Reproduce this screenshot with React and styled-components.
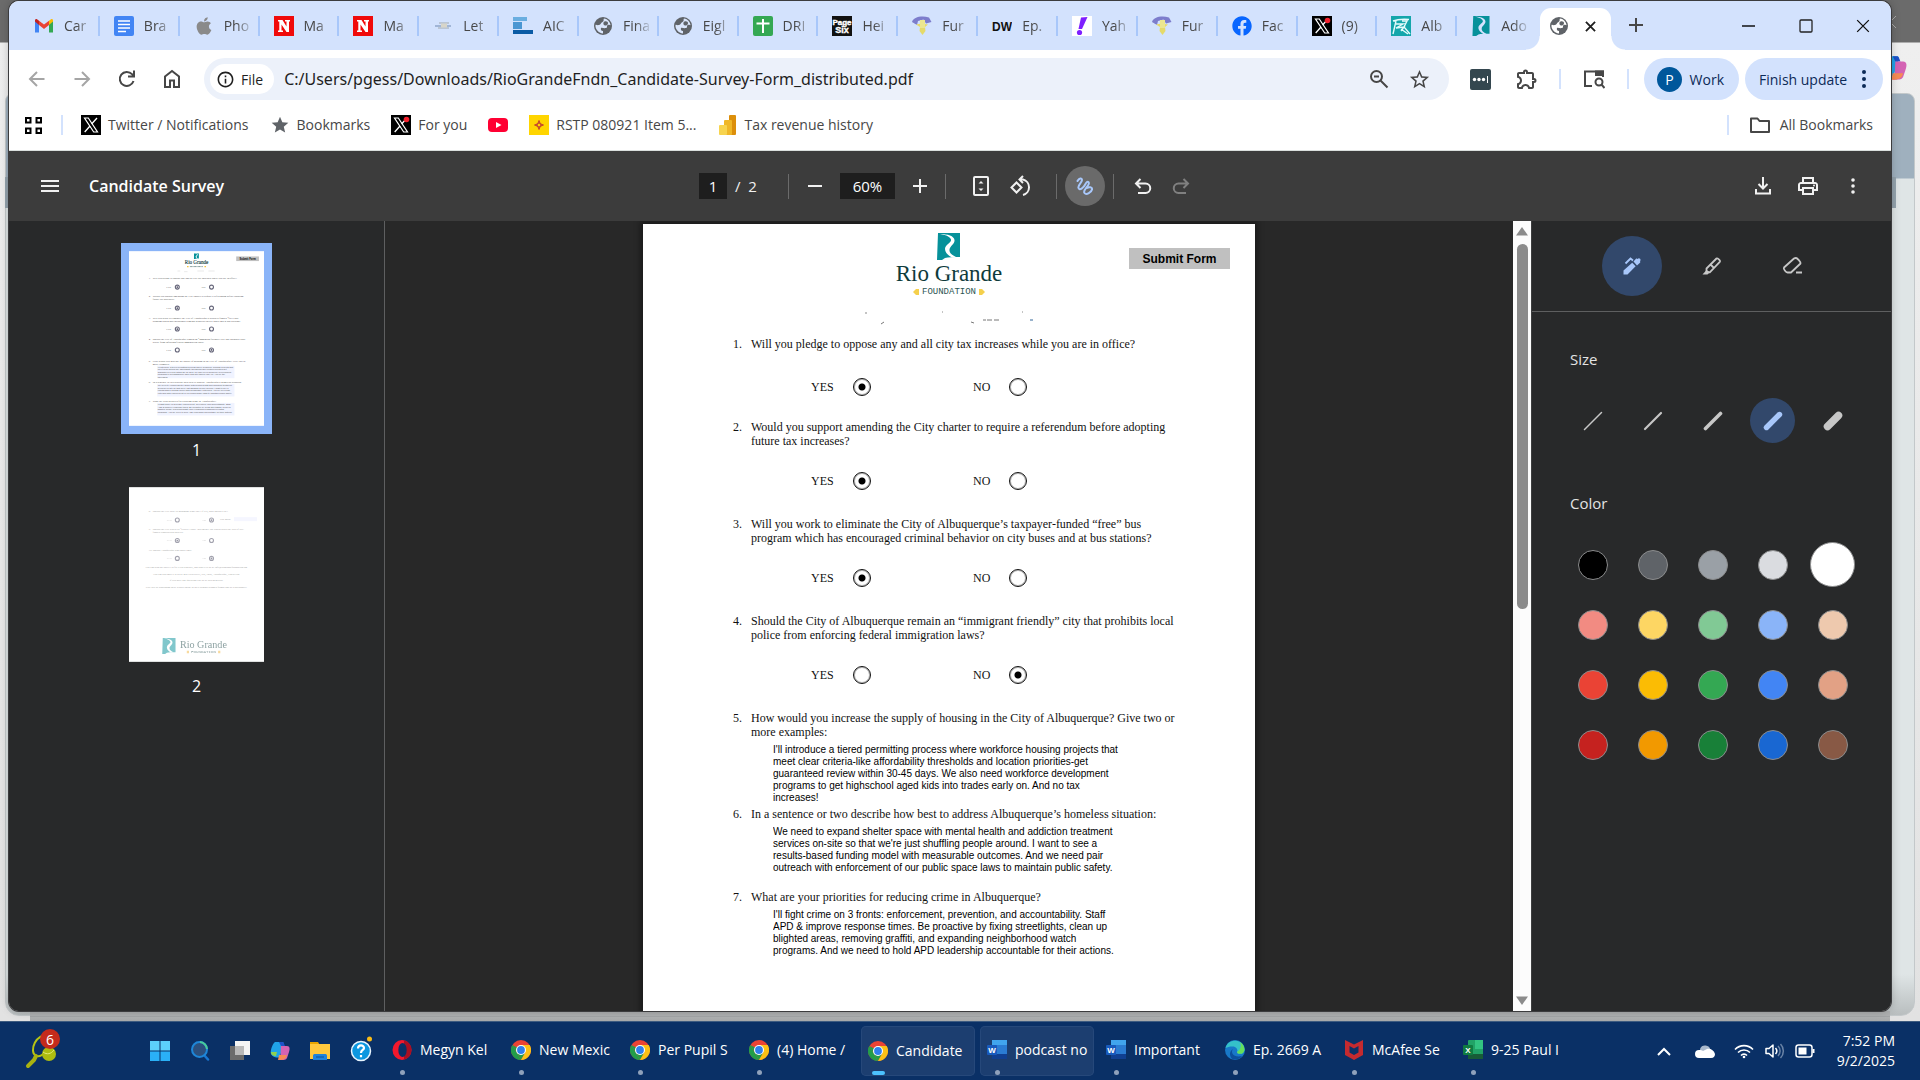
import React from "react";
import styled, { createGlobalStyle, css } from "styled-components";
import { MdStar, MdStarBorder, MdOutlineExtension, MdOutlinePrint, MdInfoOutline } from "react-icons/md";
import { FaApple, FaFacebook } from "react-icons/fa";

const ui = `"Open Sans", "Noto Sans", sans-serif`;
const serif = `"Liberation Serif", serif`;
const sans = `"Liberation Sans", sans-serif`;

const GlobalStyle = createGlobalStyle`
  * { box-sizing: border-box; }
  body { margin: 0; overflow: hidden; font-family: ${ui}; background: #e6e6e6; }
  button, input, textarea { font: inherit; color: inherit; }
  button { border: 0; padding: 0; background: none; }
  svg { display: block; flex: none; }
`;

/* ---------- shell ---------- */

const Screen = styled.div`
  height: 100vh;
  display: flex;
  flex-direction: column;
`;
const Desktop = styled.main`
  position: relative;
  flex: 1;
  min-height: 0;
  display: flex;
  padding: 1px 29px 10px 9px;
  background: linear-gradient(#6b6b6b 42px, #efefef 43px, #e2e2e2);
`;
const BackWindow = styled.div`
  position: absolute;
  left: 5px;
  right: 5px;
  top: 93px;
  bottom: 5px;
  border-radius: 8px 8px 14px 14px;
  border: 1px solid #c3c8ca;
  background: linear-gradient(#9fb0be 84px, #dfe5e6 85px, #dfe5e6 880px, #b9bebf);
`;
const BackStrip = styled.div`
  position: absolute;
  left: 5px;
  right: 24px;
  top: 177px;
  height: 31px;
  background: #94a3ad;
`;
const BottomEdge = styled.div`
  position: absolute;
  left: 30px;
  right: 30px;
  bottom: 0;
  height: 10px;
  background: linear-gradient(#aeb0b1 5px, #96999b 5px, #b0b2b3 6px, #a7a9aa);
`;
const BackClose = styled.div`
  position: absolute;
  right: 20px;
  top: 12px;
`;
const BackCopilot = styled.div`
  position: absolute;
  right: 13px;
  top: 55px;
`;
const Window = styled.section`
  position: relative;
  flex: 1;
  min-width: 0;
  display: flex;
  flex-direction: column;
  overflow: hidden;
  background: #fff;
  border-radius: 10px;
  box-shadow: 0 0 0 1px #3c3c3e, 0 0 10px rgba(0, 0, 0, 0.25);
`;

/* ---------- tab strip ---------- */

const TabStrip = styled.nav`
  height: 49px;
  display: flex;
  align-items: flex-end;
  background: #d3e2fd;
  padding-left: 11px;
`;
const Tabs = styled.div`
  flex: 1;
  min-width: 0;
  height: 49px;
  display: flex;
  align-items: center;
`;
const Tab = styled.button`
  flex: 1;
  min-width: 0;
  height: 20px;
  display: flex;
  align-items: center;
  gap: 10px;
  padding-left: 14px;
  border-right: 2px solid ${(p) => (p.$last ? "transparent" : "#a8c7fa")};
`;
const TabText = styled.span`
  max-width: 28px;
  white-space: nowrap;
  text-align: left;
  font-size: 14px;
  line-height: 20px;
  color: #474747;
  mask-image: linear-gradient(90deg, #000 12px, rgba(0, 0, 0, 0.2) 26px);
`;
const ActiveTab = styled.div`
  position: relative;
  width: 71px;
  height: 42px;
  margin-left: 3px;
  display: flex;
  align-items: center;
  justify-content: space-between;
  padding: 0 11px 6px 9px;
  border-radius: 11px 11px 0 0;
  background: #fff;
  &::before, &::after {
    content: "";
    position: absolute;
    bottom: 0;
    width: 14px;
    height: 14px;
  }
  &::before { left: -14px; background: radial-gradient(circle at 0 0, transparent 13px, #fff 14px); }
  &::after { right: -14px; background: radial-gradient(circle at 100% 0, transparent 13px, #fff 14px); }
`;
const IconButton = styled.button`
  width: ${(p) => p.$w || 45}px;
  height: ${(p) => p.$h || 40}px;
  flex: none;
  display: flex;
  align-items: center;
  justify-content: center;
  color: ${(p) => p.$color || "#474747"};
`;
const WindowButtons = styled.div`
  display: flex;
  height: 49px;
  align-items: center;
  margin-left: 59px;
`;

/* ---------- address bar ---------- */

const AddressRow = styled.div`
  height: 58px;
  display: flex;
  align-items: center;
  padding: 0 8px 0 5px;
  background: #fff;
`;
const Omnibox = styled.div`
  flex: 1;
  min-width: 0;
  height: 42px;
  margin-left: 10px;
  display: flex;
  align-items: center;
  padding: 0 10px 0 6px;
  border-radius: 21px;
  background: #ecf1fa;
`;
const FileChip = styled.button`
  height: 30px;
  display: flex;
  align-items: center;
  gap: 6px;
  padding: 0 11px 0 6px;
  border-radius: 15px;
  background: #fff;
  color: #1f1f1f;
  font-size: 14px;
  font-weight: 500;
`;
const UrlInput = styled.input`
  flex: 1;
  min-width: 0;
  margin-left: 10px;
  padding: 0;
  border: 0;
  outline: 0;
  background: none;
  color: #1f1f1f;
  font-family: "Noto Sans", sans-serif;
  font-size: 16px;
  line-height: 24px;
`;
const Divider = styled.span`
  width: 2px;
  height: 20px;
  flex: none;
  background: #d3e2fd;
`;
const Extensions = styled.div`
  display: flex;
  align-items: center;
  padding: 0 15px 0 9px;
`;
const ExtensionPair = styled.div`
  display: flex;
  padding-right: 8px;
`;
const Pill = styled.button`
  height: 42px;
  flex: none;
  display: flex;
  align-items: center;
  justify-content: space-between;
  width: ${(p) => p.$w}px;
  margin-left: ${(p) => p.$ml || 0}px;
  padding: ${(p) => p.$pad};
  border-radius: 21px;
  background: #d3e2fd;
  color: #0c2a57;
  font-size: 14px;
`;
const Avatar = styled.span`
  width: 25px;
  height: 25px;
  display: grid;
  place-items: center;
  border-radius: 50%;
  background: #00579b;
  color: #fff;
  font-size: 14px;
`;

/* ---------- bookmarks ---------- */

const BookmarkRow = styled.div`
  height: 43px;
  display: flex;
  align-items: center;
  gap: 18px;
  padding: 0 18px 8px 15px;
  border-bottom: 1px solid #dadfdd;
`;
const BookmarkList = styled.div`
  flex: 1;
  display: flex;
  gap: 21px;
`;
const Bookmark = styled.a`
  display: flex;
  align-items: center;
  gap: 7px;
  color: #474747;
  font-size: 14px;
  line-height: 20px;
  white-space: nowrap;
  text-decoration: none;
`;
const AllBookmarks = styled(Bookmark)`
  gap: 10px;
  padding-left: 3px;
`;
const Fill = styled.span`
  flex: 1;
`;

/* ---------- PDF toolbar ---------- */

const PdfBar = styled.header`
  height: 70px;
  display: grid;
  grid-template-columns: 1fr auto 1fr;
  align-items: center;
  padding: 0 16px 0 18px;
  background: #3c3c3c;
  color: #f1f1f1;
`;
const PdfTitle = styled.div`
  display: flex;
  align-items: center;
  gap: 17px;
`;
const TitleText = styled.h1`
  margin: 0;
  font-size: 16px;
  font-weight: 600;
  line-height: 24px;
  color: #fff;
`;
const PdfControls = styled.div`
  display: flex;
  align-items: center;
  margin-right: 12px;
`;
const NumberBox = styled.input`
  width: ${(p) => p.$w}px;
  height: 26px;
  padding: 0;
  border: 0;
  background: #1e1e1e;
  color: #fff;
  text-align: center;
  font-size: 15px;
`;
const PageTotal = styled.span`
  width: 61px;
  padding-left: 8px;
  font-size: 15px;
  white-space: pre;
`;
const BarLine = styled.span`
  width: 1px;
  height: 25px;
  background: #6b6b6b;
`;
const FitGroup = styled.div`
  display: flex;
  padding: 0 15px;
`;
const AnnotateButton = styled(IconButton)`
  margin: 0 8px;
  border-radius: 50%;
  background: #6a6a6a;
`;
const PdfActions = styled.div`
  display: flex;
  justify-content: flex-end;
`;

/* ---------- PDF body ---------- */

const Viewer = styled.div`
  flex: 1;
  min-height: 0;
  display: flex;
  background: #282828;
`;
const ThumbPanel = styled.aside`
  width: 376px;
  flex: none;
  display: flex;
  flex-direction: column;
  align-items: center;
  padding-top: 22px;
  border-right: 1px solid #5e5f60;
  background: #28292a;
  color: #fff;
`;
const Thumb = styled.button`
  padding: 8px;
  background: ${(p) => (p.$active ? "#8ab4f8" : "transparent")};
`;
const ThumbNumber = styled.span`
  height: 45px;
  padding-top: 4px;
  font-size: 16px;
  line-height: 24px;
`;
const Canvas = styled.div`
  flex: 1;
  min-width: 0;
  display: flex;
  justify-content: center;
  overflow: hidden;
  padding-top: 3px;
`;
const Page = styled.form`
  width: 612px;
  height: 792px;
  flex: none;
  background: #fff;
  color: #111;
  box-shadow: 0 0 6px 3px rgba(0, 0, 0, 0.35);
`;
const PageHead = styled.div`
  display: grid;
  grid-template-columns: 1fr auto 1fr;
  align-items: start;
  padding: 9px 25px 0;
`;
const Logo = styled.div`
  grid-column: 2;
  display: flex;
  flex-direction: column;
  align-items: center;
`;
const LogoName = styled.span`
  font-family: ${serif};
  font-size: 23px;
  line-height: 28px;
  color: #0f3b3c;
`;
const LogoSub = styled.span`
  display: flex;
  align-items: center;
  gap: 3px;
  font-family: "Liberation Mono", monospace;
  font-size: 9px;
  line-height: 8px;
  color: #2c5554;
`;
const SubmitButton = styled.button`
  justify-self: end;
  width: 101px;
  height: 21px;
  margin-top: 15px;
  background: #c0c0c0;
  font-family: ${sans};
  font-size: 12px;
  font-weight: 700;
  line-height: 20px;
  color: #000;
`;
const Residue = styled.div`
  height: 41px;
  padding: 15px 0 0 221px;
`;
const Question = styled.section`
  padding-left: 90px;
  font-family: ${serif};
  font-size: 12px;
  line-height: 14px;
`;
const Prompt = styled.div`
  display: grid;
  grid-template-columns: 18px 1fr;
  white-space: pre-line;
`;
const Choices = styled.div`
  display: flex;
  height: 18px;
  margin: ${(p) => (p.$single ? "27px 0 24px" : "24px 0 27px")};
  padding-left: 78px;
`;
const Choice = styled.label`
  width: ${(p) => (p.$wide ? 162 : 80)}px;
  display: flex;
  align-items: center;
  gap: 19px;
`;
const Radio = styled.input`
  appearance: none;
  width: 18px;
  height: 18px;
  margin: 0;
  border: 1px solid #111;
  border-radius: 50%;
  box-shadow: inset 0 0 0 1px #b5b5b5;
  &:checked { background: radial-gradient(circle, #000 3px, transparent 4px); }
`;
const Answer = styled.textarea`
  display: block;
  width: 400px;
  height: ${(p) => p.$lines * 12}px;
  margin: 5px 0 ${(p) => (p.$lines === 5 ? 3 : 16)}px 40px;
  padding: 0;
  border: 0;
  outline: 0;
  resize: none;
  overflow: hidden;
  background: none;
  white-space: pre;
  font-family: ${sans};
  font-size: 10px;
  line-height: 12px;
  color: #000;
`;

/* ---------- scrollbar ---------- */

const Scrollbar = styled.div`
  width: 18px;
  flex: none;
  display: flex;
  flex-direction: column;
  align-items: center;
  padding: 6px 0;
  background: #fcfcfc;
`;
const ScrollTrack = styled.div`
  flex: 1;
  width: 11px;
  margin: 8px 0;
`;
const ScrollThumb = styled.div`
  height: 49%;
  border-radius: 6px;
  background: #8b8b8b;
`;

/* ---------- ink panel ---------- */

const InkPanel = styled.aside`
  width: 360px;
  flex: none;
  border-left: 1px solid #3d3e3f;
  background: #28292a;
  color: #e3e3e3;
`;
const ToolRow = styled.div`
  display: flex;
  justify-content: center;
  gap: 20px;
  padding: 15px 0;
  border-bottom: 1px solid #5e5f60;
`;
const ToolButton = styled.button`
  width: 60px;
  height: 60px;
  display: grid;
  place-items: center;
  border-radius: 50%;
  background: ${(p) => (p.$active ? "#32486b" : "transparent")};
  color: ${(p) => (p.$active ? "#a8c7fa" : "#c7c7c7")};
`;
const InkGroup = styled.fieldset`
  margin: 0;
  padding: 35px 36px 13px 38px;
  border: 0;
`;
const InkLabel = styled.div`
  margin-bottom: 27px;
  font-size: 15px;
  line-height: 24px;
`;
const InkGrid = styled.div`
  display: grid;
  grid-template-columns: repeat(5, 45px);
  grid-auto-rows: 45px;
  place-items: center;
  gap: 15px;
`;
const SizeOption = styled.label`
  display: grid;
  place-items: center;
  color: #c7c7c7;
  & > * { grid-area: 1 / 1; }
  &:has(input:checked) { color: #a8c7fa; }
`;
const SizeRadio = styled.input`
  appearance: none;
  width: 45px;
  height: 45px;
  margin: 0;
  border-radius: 50%;
  &:checked { background: #32486b; }
`;
const Swatch = styled.input`
  appearance: none;
  width: 30px;
  height: 30px;
  margin: 0;
  border: 1px solid #8b8c8d;
  border-radius: 50%;
  background: ${(p) => p.$color};
  &:checked { width: 45px; height: 45px; }
`;

/* ---------- taskbar ---------- */

const Taskbar = styled.footer`
  height: 59px;
  flex: none;
  display: flex;
  align-items: center;
  padding: 0 25px 0 24px;
  border-top: 1px solid #3d5b80;
  background: #0a3066;
  color: #fff;
`;
const Widget = styled.button`
  position: relative;
  width: 116px;
  height: 50px;
  display: flex;
  align-items: center;
`;
const Badge = styled.span`
  position: absolute;
  left: 16px;
  top: 3px;
  width: 20px;
  height: 20px;
  display: grid;
  place-items: center;
  border-radius: 50%;
  background: #c42b1c;
  font-size: 14px;
`;
const Apps = styled.div`
  display: flex;
  gap: 5px;
  margin-left: 5px;
`;
const TaskButton = styled.button`
  width: 114px;
  height: 50px;
  display: flex;
  flex-direction: column;
  justify-content: flex-end;
  padding: 0 7px 1px;
  border-radius: 5px;
  ${(p) => p.$lit && css`background: #1c3e70; box-shadow: inset 0 0 0 1px #26487a;`}
`;
const AppMain = styled.span`
  height: 30px;
  display: flex;
  align-items: center;
  gap: 8px;
`;
const AppText = styled.span`
  white-space: nowrap;
  text-align: left;
  font-size: 14px;
  line-height: 20px;
`;
const AppMark = styled.span`
  width: ${(p) => (p.$on ? 13 : 5)}px;
  height: ${(p) => (p.$on ? 4 : 5)}px;
  margin: 5px 0 0 ${(p) => (p.$on ? 4 : 8)}px;
  border-radius: 3px;
  background: ${(p) => (p.$on ? "#4cc2ff" : "#8fa1bb")};
`;
const Tray = styled.div`
  display: flex;
  align-items: center;
`;
const Clock = styled.time`
  width: 72px;
  text-align: right;
  font-size: 14px;
  line-height: 20px;
  white-space: nowrap;
`;

/* ---------- icons ---------- */

const Svg = ({ s = 20, w, h, box = "0 0 20 20", children, ...r }) => (
  <svg width={w || s} height={h || s} viewBox={box} fill="none" aria-hidden="true" {...r}>{children}</svg>
);
const Line = (p) => <Svg stroke="currentColor" strokeWidth="2" {...p} />;

const Gmail = () => (
  <Svg><path d="M1 4v12.500h4V8z" fill="#4285f4" /><path d="M15 8v8.500h4V4z" fill="#34a853" /><path d="M1 5.500 5 9V4.800L3 3.300C2 2.700 1 3.500 1 4.500z" fill="#c5221f" /><path d="M19 5.500 15 9V4.800l2-1.500c1-.6 2 .2 2 1.200z" fill="#fbbc04" /><path d="M5 4.800 10 8.600l5-3.800V9l-5 3.900L5 9z" fill="#ea4335" /></Svg>
);
const Docs = () => (
  <Svg><rect width="20" height="20" rx="2" fill="#4285f4" /><path d="M4 5h12M4 8.500h12M4 12h12M4 15.500h8" stroke="#fff" strokeWidth="1.600" /></Svg>
);
const Apple = () => <FaApple size={20} color="#8a8a8a" />;
const Newsweek = () => (
  <Svg><rect width="20" height="20" fill="#f00a0a" /><path d="M4 4h4.500l4 6.500V5.500H11V4h5v1.500h-1V16h-2.500L7.500 8.500v6H9V16H4v-1.500h1.300v-9H4z" fill="#fff" /></Svg>
);
const Plane = () => (
  <Svg><path d="M2 10h16" stroke="#8fa6c8" strokeWidth="1.500" /><path d="M6 7h10M5 12h11" stroke="#b3bcc6" strokeWidth="1.500" /><path d="M8 7.500h6v4H8z" fill="#d7d5c9" /></Svg>
);
const Steps = () => (
  <Svg><path d="M0 1h14v4H0z" fill="#6aaee0" /><path d="M0 6h9v7H0z" fill="#4a96d2" /><path d="M0 14h20v4H0z" fill="#0a5ba5" /></Svg>
);
const Globe = ({ land = "#d9e5fb" }) => (
  <Svg><circle cx="10" cy="10" r="9" fill="#5f6368" /><path d="M11 2.500c-1 1.500.5 2.500-1.500 3.500S8 8.500 6 9s-2.500-.5-3.500 0c-.5 4 3 8 7.500 8.500v-2.500c-2 0-2.500-1.500-2-3 1-.5 3 .5 5 0s0-2.500 2-3 2 .5 2.500 0C17 5.500 14 2.700 11 2.500z" fill={land} /><path d="M11.500 5.500c2-.5 3.500.3 3.500 1.700s-1.500 2.300-3 2.300-2.500-3-.5-4z" fill="#5f6368" /></Svg>
);
const Sheets = () => (
  <Svg><rect width="20" height="20" rx="2" fill="#34a853" /><path d="M10 3v14M3.500 7.500h13" stroke="#fff" strokeWidth="2" /></Svg>
);
const PageSix = () => (
  <Svg><rect width="20" height="20" fill="#111" /><text x="10" y="8.500" textAnchor="middle" fontFamily="Liberation Sans" fontWeight="700" fontSize="8" fill="#fff" stroke="#fff" strokeWidth=".4">Page</text><text x="10" y="17" textAnchor="middle" fontFamily="Liberation Sans" fontWeight="700" fontSize="9" fill="#fff" stroke="#fff" strokeWidth=".4">Six</text></Svg>
);
const Fund = () => (
  <Svg><path d="M0 6C1 1 10-1 17 1.500l2.500 4.500-5.500 1.500-2.500-4L6 5l-1 4z" fill="#7d7dcc" /><path d="M4 8.500c3-1 8-1 12 0l-3 2.500.5 4-3 4-3-4 .5-4z" fill="#e5da6a" /><path d="M8 4h5v8H8z" fill="#ece78f" /></Svg>
);
const DailyWire = () => (
  <Svg><text x="10" y="14.500" textAnchor="middle" fontFamily="Liberation Sans" fontWeight="700" fontSize="12" fill="#111">DW</text></Svg>
);
const Yahoo = () => (
  <Svg><rect width="20" height="20" fill="#fff" /><path d="m9 1.500 6.500-.5L10 13H6.500z" fill="#7e1fff" /><circle cx="7.500" cy="16.500" r="2.600" fill="#7e1fff" /></Svg>
);
const Facebook = () => <FaFacebook size={20} color="#0866ff" />;
const XLogo = ({ dot }) => (
  <Svg><rect width="20" height="20" fill="#000" /><path d="M3.500 3h3.800l9.200 14h-3.800z" stroke="#fff" strokeWidth="1.200" /><path d="m16 3-5.400 6M9 11l-5.300 6" stroke="#fff" strokeWidth="1.300" />{dot && <circle cx="15.500" cy="4.500" r="2.800" fill="#f4212e" />}</Svg>
);
const Albq = () => (
  <Svg><rect width="20" height="20" fill="#14a6ab" /><path d="M2 5c4-1.500 9-2 16-1.500M2 18 5 5M5 8h7l-7 4 8-1-3 4M11 5h5l-3 6 6 7M10 13l7 5" stroke="#e4fbfb" strokeWidth="1.400" /></Svg>
);
const RiverMark = ({ color = "#06919a", water = "#fff" }) => (
  <g><path d="M1 0h22v24c-7 0-12 0-15 1L5 27H0z" fill={color} /><path d="M3 1C10 2 13 4 14 6.500c1 3-6 5-6 9.500 0 4 4 7 7 8.500l4-.500c-4-2-7-4-6.500-7.500C13 13 18 11 17.500 7 17 3 11 1 3 1z" fill={water} /></g>
);
const River = ({ w = 20, h = 20, water }) => <Svg w={w} h={h} box="0 0 23 27"><RiverMark water={water} /></Svg>;
const Close = ({ s = 12, sw = 2 }) => <Line s={s} box="0 0 12 12" strokeWidth={sw}><path d="m1 1 10 10M11 1 1 11" /></Line>;
const Plus = ({ s = 14 }) => <Line s={s} box="0 0 14 14"><path d="M7 0v14M0 7h14" /></Line>;
const Dots = () => <Svg w={20} h={20} fill="currentColor"><circle cx="10" cy="3" r="2" /><circle cx="10" cy="10" r="2" /><circle cx="10" cy="17" r="2" /></Svg>;
const BackIcon = () => <Line s={20}><path d="M17.500 10H3.500M10 3l-7 7 7 7" /></Line>;
const ForwardIcon = () => <Line s={20}><path d="M2.500 10h14M10 3l7 7-7 7" /></Line>;
const ReloadIcon = () => <Line s={20}><path d="M16.500 12A7 7 0 1 1 15 5.200l1.500 1.600M17 1.500v6h-6" /></Line>;
const HomeIcon = () => <Line s={20}><path d="M3 7.500 10 2l7 5.500V18h-5v-6.500H8V18H3z" /></Line>;
const ZoomOut = () => <Line s={20}><circle cx="7.500" cy="7.500" r="5.500" /><path d="m11.500 11.500 7 7M5 7.500h5" /></Line>;
const KeyExt = () => <Svg w={21} h={21} box="0 0 21 21"><rect width="21" height="21" rx="2" fill="#34474f" /><circle cx="4.500" cy="10.500" r="1.700" fill="#fff" /><circle cx="9" cy="10.500" r="1.700" fill="#fff" /><circle cx="13.500" cy="10.500" r="1.700" fill="#fff" /><path d="M17.500 7v7" stroke="#fff" /></Svg>;
const TabSearch = () => <Line w={22} h={20} box="0 0 22 20"><path d="M9 17H2V2.500h18V8" /><path d="M13 2.500h7V6h-7z" fill="currentColor" /><circle cx="16" cy="13" r="3.500" /><path d="m18.500 15.500 3 3.500" /></Line>;
const AppsGrid = () => <Line w={19} h={19} box="0 0 19 19"><path d="M2 2h4.500v4.500H2zM12.500 2H17v4.500h-4.500zM2 12.500h4.500V17H2zM12.500 12.500H17V17h-4.500z" /></Line>;
const Youtube = () => <Svg><rect y="3" width="20" height="14" rx="4" fill="#ff0033" /><path d="m8 7 5.500 3L8 13z" fill="#fff" /></Svg>;
const Zia = () => <Svg><rect width="20" height="20" fill="#ffd500" /><circle cx="10" cy="10" r="2" stroke="#c8502a" strokeWidth="1.500" /><path d="M10 5.500V8M10 12v2.500M5.500 10H8M12 10h2.500" stroke="#c8502a" strokeWidth="2" /></Svg>;
const PowerBi = () => <Svg><rect x="12" y="0" width="7" height="20" rx="1" fill="#dc8f0b" /><rect x="7" y="5" width="8" height="15" rx="1" fill="#efb728" /><rect x="2" y="10" width="8" height="10" rx="1" fill="#f7d44f" /></Svg>;
const Folder = () => <Line><path d="M1 3.500h6.500L9.500 6H19v11H1z" strokeLinejoin="round" /></Line>;
const Menu = () => <Line w={18} h={14} box="0 0 18 14"><path d="M0 2h18M0 7h18M0 12h18" /></Line>;
const FitPage = () => <Line w={16} h={20} box="0 0 16 20"><rect x="1" y="1" width="14" height="18" rx="1" /><path d="M5.500 7.500h5L8 5zM5.500 12.500h5L8 15z" fill="currentColor" stroke="none" /></Line>;
const Rotate = () => <Line w={22} h={22} box="0 0 22 22"><path d="m1.500 12.500 5-5 5 5-5 5z" /><path d="M13 20a8 8 0 0 0 0-15.500h-3M13 1 9.500 4.500 13 8" /></Line>;
const Squiggle = () => <Line s={20} stroke="#a8c7fa"><path d="M2.500 5C4 2 7 1.500 7 4S2.500 9 3.500 12s5 0 7-4 4-2 3 .5-6 6-4 8.500 7-1 7.500-3.500-3-3-5-1.500" strokeLinecap="round" /></Line>;
const Undo = ({ flip }) => <Line w={18} h={18} box="0 0 18 18" transform={flip ? "scale(-1 1)" : undefined}><path d="M6.500 2 2 6.500 6.500 11M2 6.500h9.500a4.500 4.500 0 0 1 0 9.500H4" /></Line>;
const Download = () => <Line w={16} h={18} box="0 0 16 18"><path d="M8 0v11M3.500 7 8 11.500 12.500 7M1 12v4.500h14V12" /></Line>;
const PenIcon = () => <Svg s={20}><path d="m11.500 5.500 2.500-2.700c.6-.6 1.200-.3 1.600.2.700-1 1.800-1 2.500-.2s.6 1.800-.2 2.500c.5.400.6 1 .1 1.500L15 9.500z" fill="currentColor" /><path d="m10.200 6.800 3.400 3.500L5.500 18.500H1.500v-4z" fill="currentColor" /><path d="m3.500 7.500 5-5L11 4.500" stroke="currentColor" strokeWidth="1.800" /></Svg>;
const MarkerIcon = () => <Line s={20} strokeWidth="1.800"><path d="m4.500 12.500 10-10c.8-.8 4.300 2.200 3.300 3.300l-10 10.500H4.500zM8.500 8.500l3.500 3.500" /><path d="M4.500 14 .5 18.500h5L8 16z" fill="currentColor" stroke="none" /></Line>;
const EraserIcon = () => <Line s={20} strokeWidth="1.800"><path d="M12 2.500 2 11.500c-1 1.500 2 5 3.500 5H9l9.500-9C19 6 15 2 14 2s-1.300 0-2 .5zM14 16.500h6" strokeLinejoin="round" /></Line>;

const Chrome = () => (
  <Svg><circle cx="10" cy="10" r="10" fill="#ea4335" /><path d="M1.300 5 10 20A10 10 0 0 1 1.300 5z" fill="#229e4a" /><path d="M1.300 5 6 13l4 7 4.500-8z" fill="#229e4a" /><path d="M18.700 5A10 10 0 0 1 10 20l4.300-7.500L10 5z" fill="#fbc116" /><circle cx="10" cy="10" r="5" fill="#fff" /><circle cx="10" cy="10" r="3.900" fill="#2f80ed" /></Svg>
);
const Opera = () => <Svg><ellipse cx="10" cy="10" rx="9.500" ry="10" fill="#f3182d" /><path d="M12 .3a10 10 0 0 1 0 19.400z" fill="#a90f22" /><ellipse cx="10.500" cy="10" rx="4.200" ry="7" fill="#0a3066" /></Svg>;
const Word = () => <Svg><rect x="5" width="15" height="19" rx="1" fill="#2b7cd3" /><rect x="5" width="15" height="5" fill="#41a5ee" /><rect x="5" y="14" width="15" height="5" fill="#103f91" /><rect y="5" width="10" height="10" rx="1" fill="#185abd" /><text x="5" y="13" textAnchor="middle" fontFamily="Liberation Sans" fontWeight="700" fontSize="8" fill="#fff">W</text></Svg>;
const Excel = () => <Svg><rect x="5" width="15" height="19" rx="1" fill="#21a366" /><rect x="12" width="8" height="9" fill="#33c481" /><rect x="5" y="14" width="15" height="5" fill="#185c37" /><rect y="5" width="10" height="10" rx="1" fill="#107c41" /><text x="5" y="13" textAnchor="middle" fontFamily="Liberation Sans" fontWeight="700" fontSize="8" fill="#fff">X</text></Svg>;
const Edge = () => <Svg><circle cx="10" cy="10" r="10" fill="#1878c8" /><path d="M.5 8C2 1 10-1 15 2c4 2.500 6 8 3 11-2 1.500-6 1-6-1 1-2 0-4-2-5-3-1-7 0-9.500 1z" fill="#35c1c9" /><path d="M15 2c4 2.500 6 8 3 11-2 1.500-6 1-6-1 3-2 5-5 3-10z" fill="#66e05a" /><path d="M8 9c-3 4 1 9 9 7-2 3-6 4-9 3.500C4 17 4 11 8 9z" fill="#0c4f9c" /></Svg>;
const McAfee = () => <Svg><path d="M1 0 10 4.500 19 0v15l-9 5-9-5zm4.500 6v6.500L10 15l4.500-2.500V6L10 8.500z" fill="#c52a2f" fillRule="evenodd" /></Svg>;
const Start = () => <Svg><path d="M0 0h9.500v9.500H0zM10.500 0H20v9.500h-9.500z" fill="#5cd0fb" /><path d="M0 10.500h9.500V20H0zM10.500 10.500H20V20h-9.500z" fill="#2ab0f6" /></Svg>;
const SearchIcon = () => <Svg><path d="m14 14 4 4.500" stroke="#1877d2" strokeWidth="2.500" strokeLinecap="round" /><circle cx="9.500" cy="8.500" r="7.500" fill="#2c4f7d" stroke="#1e86d8" strokeWidth="2" /><path d="M10 1a7.500 7.500 0 0 1 7 7" stroke="#49cc9a" strokeWidth="2" /></Svg>;
const TaskView = () => <Svg><rect y="5" width="14" height="14" fill="#6b6b6b" /><rect x="5" width="15" height="14" fill="#f4f4f4" /><rect x="5" y="5" width="9" height="9" fill="#b9b9b9" /></Svg>;
const Copilot = ({ s = 20 }) => <Svg s={s}><path d="M5 1h7c2 0 2 1.500 1.500 3L10 15c-1 3-8 1-9-2-1-2 1-10 4-12z" fill="#20a3e8" /><path d="M9 1h3c2 0 2 2 3 4h-4z" fill="#1f50c8" /><path d="M1 11h6l-1 4c-3 0-5-1-5-4z" fill="#8fd14f" /><path d="M11 5h6c3 0 3 3 2 6l-2 6c-1 2-3 2-5 2H8c2 0 2-2 2.500-3z" fill="#d463b4" /><path d="M9 14h8c-1 4-3 5-9 5z" fill="#f78b54" /></Svg>;
const Explorer = () => <Svg><path d="M0 1h8l1.500 2.500H0z" fill="#e8a500" /><rect y="3" width="20" height="15" fill="#ffc83d" /><path d="M3 19v-4.500c0-1 1-1.500 2-1.500h10c1 0 2 .5 2 1.500V19z" fill="#1f83dc" /><path d="M6 16h8" stroke="#0b529c" /></Svg>;
const Help = () => <Svg w={24} h={30} box="0 0 24 30"><circle cx="13" cy="15" r="9.500" fill="#0c97e0" stroke="#e9f6ff" strokeWidth="1.500" /><path d="M10 12.500c0-4 6-4 6-.5 0 2-3 2-3 5M13 19v2.200" stroke="#fff" strokeWidth="2.200" /><circle cx="21.500" cy="3" r="2.500" fill="#fbbc16" /></Svg>;
const Tennis = () => <Svg w={32} h={36} box="0 0 32 36"><ellipse cx="17" cy="13" rx="7" ry="11" transform="rotate(28 17 13)" stroke="#b6c414" strokeWidth="2" /><path d="m12 23-2 4-6 6" stroke="#a9b210" strokeWidth="4" strokeLinecap="round" /><circle cx="25" cy="21" r="7" fill="#aebd10" /><path d="M19 19c4 3 8 2 11-2" stroke="#e3ec7a" /></Svg>;
const Chevron = () => <Line w={14} h={9} box="0 0 14 9" stroke="#fff"><path d="m1 8 6-6 6 6" /></Line>;
const Cloud = () => <Svg w={20} h={14} box="0 0 20 14"><path d="M5 5a5.500 5.500 0 0 1 10.500 1L6 11z" fill="#a9b8cc" /><path d="M4 14a4 4 0 0 1 0-8c2 0 3 0 4 1l4-2c3-1 7 1 8 5 0 2-1 4-4 4z" fill="#fff" /></Svg>;
const Wifi = () => <Line w={20} h={16} box="0 0 20 16" stroke="#fff" strokeWidth="1.600"><path d="M1 6.500a12.500 12.500 0 0 1 18 0M4 9.500a8.500 8.500 0 0 1 12 0M7 12.500a4 4 0 0 1 6 0" /><circle cx="10" cy="14" r="1.300" fill="#fff" stroke="none" /></Line>;
const Volume = () => <Line w={20} h={16} box="0 0 20 16" stroke="#fff" strokeWidth="1.500"><path d="M1 5.500h3L8 2v12l-4-3.500H1z" strokeLinejoin="round" /><path d="M10.500 5a4.500 4.500 0 0 1 0 6" /><path d="M13 3a7 7 0 0 1 0 10M15.500 1a10 10 0 0 1 0 14" stroke="#6a83a6" /></Line>;
const Battery = () => <Svg w={20} h={14} box="0 0 20 14"><rect x="1" y="1" width="16" height="12" rx="2.500" stroke="#fff" strokeWidth="1.500" /><rect x="3.500" y="3.500" width="8" height="7" fill="#fff" /><path d="M18.500 5v4" stroke="#fff" strokeWidth="2" /></Svg>;

/* ---------- data ---------- */

const tabs = [
  [Gmail, "Car"], [Docs, "Bra"], [Apple, "Pho"], [Newsweek, "Ma"], [Newsweek, "Ma"], [Plane, "Let"], [Steps, "AIC"],
  [Globe, "Fina"], [Globe, "Eigl"], [Sheets, "DRI"], [PageSix, "Hei"], [Fund, "Fur"], [DailyWire, "Ep."], [Yahoo, "Yah"],
  [Fund, "Fur"], [Facebook, "Fac"], [() => <XLogo dot />, "(9)"], [Albq, "Alb"], [() => <River water="#d3e2fd" />, "Ado"],
];

const bookmarks = [
  [() => <XLogo />, "Twitter / Notifications"],
  [() => <MdStar size={20} color="#5f6368" />, "Bookmarks"],
  [() => <XLogo dot />, "For you"],
  [Youtube, ""],
  [Zia, "RSTP 080921 Item 5..."],
  [PowerBi, "Tax revenue history"],
];

const questions = [
  { q: "Will you pledge to oppose any and all city tax increases while you are in office?", yes: true, single: true },
  { q: "Would you support amending the City charter to require a referendum before adopting\nfuture tax increases?", yes: true },
  { q: "Will you work to eliminate the City of Albuquerque’s taxpayer-funded “free” bus\nprogram which has encouraged criminal behavior on city buses and at bus stations?", yes: true },
  { q: "Should the City of Albuquerque remain an “immigrant friendly” city that prohibits local\npolice from enforcing federal immigration laws?", yes: false },
  { q: "How would you increase the supply of housing in the City of Albuquerque? Give two or\nmore examples:", lines: ["I'll introduce a tiered permitting process where workforce housing projects that", "meet clear criteria-like affordability thresholds and location priorities-get", "guaranteed review within 30-45 days. We also need workforce development", "programs to get highschool aged kids into trades early on. And no tax", "increases!"] },
  { q: "In a sentence or two describe how best to address Albuquerque’s homeless situation:", lines: ["We need to expand shelter space with mental health and addiction treatment", "services on-site so that we're just shuffling people around. I want to see a", "results-based funding model with measurable outcomes. And we need pair", "outreach with enforcement of our public space laws to maintain public safety."] },
  { q: "What are your priorities for reducing crime in Albuquerque?", lines: ["I'll fight crime on 3 fronts: enforcement, prevention, and accountability. Staff", "APD & improve response times. Be proactive by fixing streetlights, clean up", "blighted areas, removing graffiti, and expanding neighborhood watch", "programs. And we need to hold APD leadership accountable for their actions."] },
];

const colors = [
  "#000000", "#5f6368", "#9aa0a6", "#dadce0", "#ffffff",
  "#f28b82", "#fdd663", "#81c995", "#8ab4f8", "#eec9ae",
  "#ea4335", "#fbbc04", "#34a853", "#4285f4", "#e2a185",
  "#c5221f", "#f29900", "#188038", "#1967d2", "#885945",
];

const apps = [
  [Opera, "Megyn Kel"], [Chrome, "New Mexic"], [Chrome, "Per Pupil S"], [Chrome, "(4) Home /"], [Chrome, "Candidate", true, true],
  [Word, "podcast no", true], [Word, "Important"], [Edge, "Ep. 2669 A"], [McAfee, "McAfee Se"], [Excel, "9-25 Paul I"],
];

/* ---------- page previews ---------- */

const previewTop = [120, 202, 299, 397, 494, 590, 676];
const PreviewRing = ({ x, y, on }) => (
  <g><circle cx={x} cy={y} r="9" stroke="#66667a" strokeWidth="5" fill="#fff" />{on && <circle cx={x} cy={y} r="4" fill="#55556a" />}</g>
);
const PreviewOne = () => (
  <Svg w={135} h={175} box="0 0 612 792" fontFamily="Liberation Serif" fontSize="12">
    <rect width="612" height="792" fill="#fff" />
    <svg x="294" y="9" width="23" height="27" viewBox="0 0 23 27"><RiverMark /></svg>
    <text x="306" y="60" textAnchor="middle" fontSize="23" fill="#0f3b3c" stroke="#0f3b3c" strokeWidth=".5">Rio Grande</text>
    <path d="M263 70h7M342 70h7" stroke="#f3c63f" strokeWidth="5" />
    <path d="M276 70h60" stroke="#5c7c7b" strokeWidth="4" strokeDasharray="4 2" />
    <rect x="486" y="24" width="103" height="21" fill="#c0c0c0" />
    <text x="538" y="39" textAnchor="middle" fontFamily="Liberation Sans" fontWeight="700" fontSize="12" fill="#000">Submit Form</text>
    <path d="M220 90h12M250 93h15M310 90h30M360 90h28" stroke="#ddd" strokeWidth="3" />
    {questions.map((item, i) => (
      <g key={item.q} fill="#444">
        <text x="90" y={previewTop[i] + 7}>{i + 1}.</text>
        {item.q.split("\n").map((t, n) => <text key={t} x="108" y={previewTop[i] + 7 + n * 14}>{t}</text>)}
        {item.lines ? (
          <g>
            <rect x="128" y={previewTop[i] + (i === 4 ? 25 : 12)} width="350" height="57" fill="#f0f3ff" />
            {item.lines.map((t, n) => <text key={t} x="130" y={previewTop[i] + (i === 4 ? 36 : 23) + n * 11} fontFamily="Liberation Sans" fontSize="10" fill="#555">{t}</text>)}
          </g>
        ) : (
          <g>
            <text x="168" y={167 + i * 95}>YES</text><PreviewRing x={219} y={163 + i * 95} on={item.yes} />
            <text x="329" y={167 + i * 95}>NO</text><PreviewRing x={374} y={163 + i * 95} on={!item.yes} />
          </g>
        )}
      </g>
    ))}
  </Svg>
);
const PreviewTwo = () => (
  <Svg w={135} h={175} box="0 0 612 792" fontFamily="Liberation Serif" fontSize="12">
    <rect width="612" height="792" fill="#fff" />
    <g fill="#999">
      <text x="90" y="114">8.</text><text x="108" y="114">Should the City raise its minimum wage rate? If yes, what should it be?</text>
      <text x="90" y="196">9.</text><text x="108" y="196">Should the City repeal its “Project Labor Agreement” law which raises the cost of city-</text><text x="108" y="210">funded construction projects.</text>
      <text x="90" y="291">10.</text><text x="108" y="291">Should Albuquerque ban photo tags?</text>
      {[149, 242, 323].map((y, i) => (
        <g key={y} opacity=".6"><text x="170" y={y + 4}>YES</text><PreviewRing x={219} y={y} on={i === 1} /><text x="333" y={y + 4}>NO</text><PreviewRing x={374} y={y} on={i !== 1} /></g>
      ))}
      <text x="413" y="150" fontSize="10">How much?</text>
      <rect x="476" y="136" width="104" height="18" fill="#f5f6ff" />
      <g textAnchor="middle">
        <text x="305" y="368">You can scan the survey or fill it out digitally, and send it to us at: info@riograndefoundation.org</text>
        <text x="305" y="399">You can also mail it to us at: 400 Gold Street, SW, #200, Albuquerque, NM 87102</text>
        <text x="305" y="426">If you have any questions call us at: 505-264-6090</text>
        <text x="305" y="458">*We will be publishing these results online in their original scanned format and as a spreadsheet</text>
      </g>
    </g>
    <g opacity=".5">
      <svg x="150" y="684" width="62" height="72" viewBox="0 0 23 27"><RiverMark /></svg>
      <text x="231" y="727" fontSize="46" fill="#0f3b3c">Rio Grande</text>
      <text x="281" y="753" fontFamily="Liberation Mono" fontSize="19" fill="#0f3b3c">FOUNDATION</text>
      <path d="M262 747h10M404 747h10" stroke="#f3b63f" strokeWidth="11" />
    </g>
  </Svg>
);

/* ---------- app ---------- */

export default function App() {
  return (
    <Screen>
      <GlobalStyle />
      <Desktop>
        <BackWindow />
        <BackStrip />
        <BottomEdge />
        <BackClose><Svg s={20}><path d="m4 4 12 12M16 4 4 16" stroke="#aaa" /></Svg></BackClose>
        <BackCopilot><Copilot s={26} /></BackCopilot>
        <Window>
          <TabStrip>
            <Tabs>
              {tabs.map(([Icon, label], i) => (
                <Tab key={i} $last={i === tabs.length - 1}><Icon /><TabText>{label}</TabText></Tab>
              ))}
            </Tabs>
            <ActiveTab><Globe land="#fff" /><IconButton $w={20} $h={20} $color="#1f1f1f" aria-label="Close tab"><Close s={11} /></IconButton></ActiveTab>
            <IconButton $w={50} $h={50} aria-label="New tab"><Plus /></IconButton>
            <WindowButtons>
              <IconButton $w={57} $color="#111" aria-label="Minimize"><Svg w={13} h={2} box="0 0 13 2"><path d="M0 1h13" stroke="#111" strokeWidth="1.500" /></Svg></IconButton>
              <IconButton $w={57} $color="#111" aria-label="Maximize"><Svg s={14} box="0 0 14 14"><rect x="1" y="1" width="12" height="12" rx="1" stroke="#222" strokeWidth="1.300" /></Svg></IconButton>
              <IconButton $w={57} $color="#111" aria-label="Close"><Close s={14} sw={1.1} /></IconButton>
            </WindowButtons>
          </TabStrip>

          <AddressRow>
            <IconButton $color="#a5a5a5" aria-label="Back"><BackIcon /></IconButton>
            <IconButton $color="#a5a5a5" aria-label="Forward"><ForwardIcon /></IconButton>
            <IconButton aria-label="Reload"><ReloadIcon /></IconButton>
            <IconButton aria-label="Home"><HomeIcon /></IconButton>
            <Omnibox>
              <FileChip><MdInfoOutline size={19} />File</FileChip>
              <UrlInput aria-label="Address" defaultValue="C:/Users/pgess/Downloads/RioGrandeFndn_Candidate-Survey-Form_distributed.pdf" />
              <IconButton $w={40} aria-label="Zoom"><ZoomOut /></IconButton>
              <IconButton $w={40} aria-label="Bookmark this page"><MdStarBorder size={23} /></IconButton>
            </Omnibox>
            <Extensions>
              <ExtensionPair>
                <IconButton aria-label="Password manager"><KeyExt /></IconButton>
                <IconButton $w={48} aria-label="Extensions"><MdOutlineExtension size={24} /></IconButton>
              </ExtensionPair>
              <Divider />
              <IconButton $w={66} aria-label="Search tabs"><TabSearch /></IconButton>
              <Divider />
            </Extensions>
            <Pill $w={95} $pad="0 15px 0 13px"><Avatar>P</Avatar>Work</Pill>
            <Pill $w={138} $ml={6} $pad="0 9px 0 14px">Finish update<Dots /></Pill>
          </AddressRow>

          <BookmarkRow>
            <AppsGrid />
            <Divider />
            <BookmarkList>
              {bookmarks.map(([Icon, label], i) => (
                <Bookmark key={i} href="#" aria-label={label || "YouTube"}><Icon />{label}</Bookmark>
              ))}
            </BookmarkList>
            <Divider />
            <AllBookmarks href="#"><Folder />All Bookmarks</AllBookmarks>
          </BookmarkRow>

          <PdfBar>
            <PdfTitle>
              <IconButton aria-label="Menu" $color="#f1f1f1"><Menu /></IconButton>
              <TitleText>Candidate Survey</TitleText>
            </PdfTitle>
            <PdfControls>
              <NumberBox $w={28} aria-label="Page number" defaultValue="1" />
              <PageTotal>/  2</PageTotal>
              <BarLine />
              <IconButton $w={51} $color="#f1f1f1" aria-label="Zoom out"><Svg w={14} h={2} box="0 0 14 2"><path d="M0 1h14" stroke="#f1f1f1" strokeWidth="2" /></Svg></IconButton>
              <NumberBox $w={55} aria-label="Zoom level" defaultValue="60%" />
              <IconButton $w={50} $color="#f1f1f1" aria-label="Zoom in"><Plus /></IconButton>
              <BarLine />
              <FitGroup>
                <IconButton $w={40} $color="#f1f1f1" aria-label="Fit to page"><FitPage /></IconButton>
                <IconButton $w={40} $color="#f1f1f1" aria-label="Rotate"><Rotate /></IconButton>
              </FitGroup>
              <BarLine />
              <AnnotateButton $w={40} aria-label="Draw"><Squiggle /></AnnotateButton>
              <BarLine />
              <IconButton $w={57} $color="#f1f1f1" aria-label="Undo"><Undo /></IconButton>
              <IconButton $w={20} $color="#808080" aria-label="Redo"><Undo flip /></IconButton>
            </PdfControls>
            <PdfActions>
              <IconButton $color="#f1f1f1" aria-label="Download"><Download /></IconButton>
              <IconButton $color="#f1f1f1" aria-label="Print"><MdOutlinePrint size={24} /></IconButton>
              <IconButton $color="#f1f1f1" aria-label="More actions"><Svg s={20} fill="currentColor"><circle cx="10" cy="4" r="1.800" /><circle cx="10" cy="10" r="1.800" /><circle cx="10" cy="16" r="1.800" /></Svg></IconButton>
            </PdfActions>
          </PdfBar>

          <Viewer>
            <ThumbPanel>
              <Thumb $active aria-label="Page 1"><PreviewOne /></Thumb>
              <ThumbNumber>1</ThumbNumber>
              <Thumb aria-label="Page 2"><PreviewTwo /></Thumb>
              <ThumbNumber>2</ThumbNumber>
            </ThumbPanel>

            <Canvas>
              <Page onSubmit={(e) => e.preventDefault()}>
                <PageHead>
                  <Logo>
                    <River w={23} h={27} />
                    <LogoName>Rio Grande</LogoName>
                    <LogoSub><Svg w={6} h={6} box="0 0 6 6"><path d="M0 3 3 0h3v6H3z" fill="#f5d04c" /></Svg>FOUNDATION<Svg w={6} h={6} box="0 0 6 6"><path d="M6 3 3 0H0v6h3z" fill="#f5d04c" /></Svg></LogoSub>
                  </Logo>
                  <SubmitButton>Submit Form</SubmitButton>
                </PageHead>
                <Residue>
                  <Svg w={170} h={14} box="0 0 170 14"><path d="M2 1v2M78 1h1M158 1h1" stroke="#888" /><path d="m20 11-3 2M107 11l3 1M119 9h3m1 0h5m2 0h5" stroke="#777" /><path d="M166 9h3" stroke="#369" /></Svg>
                </Residue>
                {questions.map((item, i) => (
                  <Question key={item.q}>
                    <Prompt><span>{i + 1}.</span><label id={`prompt-${i}`} htmlFor={item.lines ? `answer-${i}` : undefined}>{item.q}</label></Prompt>
                    {item.lines ? (
                      <Answer id={`answer-${i}`} $lines={item.lines.length} defaultValue={item.lines.join("\n")} spellCheck={false} />
                    ) : (
                      <Choices $single={item.single} role="radiogroup" aria-labelledby={`prompt-${i}`}>
                        <Choice $wide>YES<Radio type="radio" name={`choice-${i}`} defaultChecked={item.yes} /></Choice>
                        <Choice>NO<Radio type="radio" name={`choice-${i}`} defaultChecked={!item.yes} /></Choice>
                      </Choices>
                    )}
                  </Question>
                ))}
              </Page>
            </Canvas>

            <Scrollbar>
              <Svg w={12} h={9} box="0 0 12 9"><path d="M6 0l6 8.500H0z" fill="#8b8b8b" /></Svg>
              <ScrollTrack><ScrollThumb /></ScrollTrack>
              <Svg w={12} h={9} box="0 0 12 9"><path d="M6 9l6-8.500H0z" fill="#8b8b8b" /></Svg>
            </Scrollbar>

            <InkPanel>
              <ToolRow>
                <ToolButton $active aria-label="Pen"><PenIcon /></ToolButton>
                <ToolButton aria-label="Highlighter"><MarkerIcon /></ToolButton>
                <ToolButton aria-label="Eraser"><EraserIcon /></ToolButton>
              </ToolRow>
              <InkGroup>
                <InkLabel>Size</InkLabel>
                <InkGrid>
                  {[1.5, 2.2, 3.6, 5.4, 7.5].map((w, i) => (
                    <SizeOption key={w}>
                      <SizeRadio type="radio" name="size" aria-label={`Size ${i + 1}`} defaultChecked={i === 3} />
                      <Svg s={20}><path d={["m1.500 18.500 17-17", "m2 18 16-16", "m2.500 17.500 15-15", "m3.500 16.500 13-13", "m4.500 15.500 11-11"][i]} stroke="currentColor" strokeWidth={w} strokeLinecap="round" /></Svg>
                    </SizeOption>
                  ))}
                </InkGrid>
              </InkGroup>
              <InkGroup>
                <InkLabel>Color</InkLabel>
                <InkGrid>
                  {colors.map((c, i) => <Swatch key={c} type="radio" name="color" aria-label={c} $color={c} defaultChecked={i === 4} />)}
                </InkGrid>
              </InkGroup>
            </InkPanel>
          </Viewer>
        </Window>
      </Desktop>

      <Taskbar>
        <Widget aria-label="Widgets"><Tennis /><Badge>6</Badge></Widget>
        {[[Start, "Start"], [SearchIcon, "Search"], [TaskView, "Task view"], [Copilot, "Copilot"], [Explorer, "File Explorer"], [Help, "Get help"]].map(([Icon, name]) => (
          <IconButton key={name} $w={40} aria-label={name}><Icon /></IconButton>
        ))}
        <Apps>
          {apps.map(([Icon, label, lit, on]) => (
            <TaskButton key={label} $lit={lit}>
              <AppMain><Icon /><AppText>{label}</AppText></AppMain>
              <AppMark $on={on} />
            </TaskButton>
          ))}
        </Apps>
        <Fill />
        <Tray>
          <IconButton $w={42} aria-label="Hidden icons"><Chevron /></IconButton>
          <IconButton $w={40} aria-label="OneDrive"><Cloud /></IconButton>
          <IconButton $w={38} aria-label="Network"><Wifi /></IconButton>
          <IconButton $w={24} aria-label="Volume"><Volume /></IconButton>
          <IconButton $w={36} aria-label="Battery"><Battery /></IconButton>
          <Clock>7:52 PM<br />9/2/2025</Clock>
        </Tray>
      </Taskbar>
    </Screen>
  );
}
